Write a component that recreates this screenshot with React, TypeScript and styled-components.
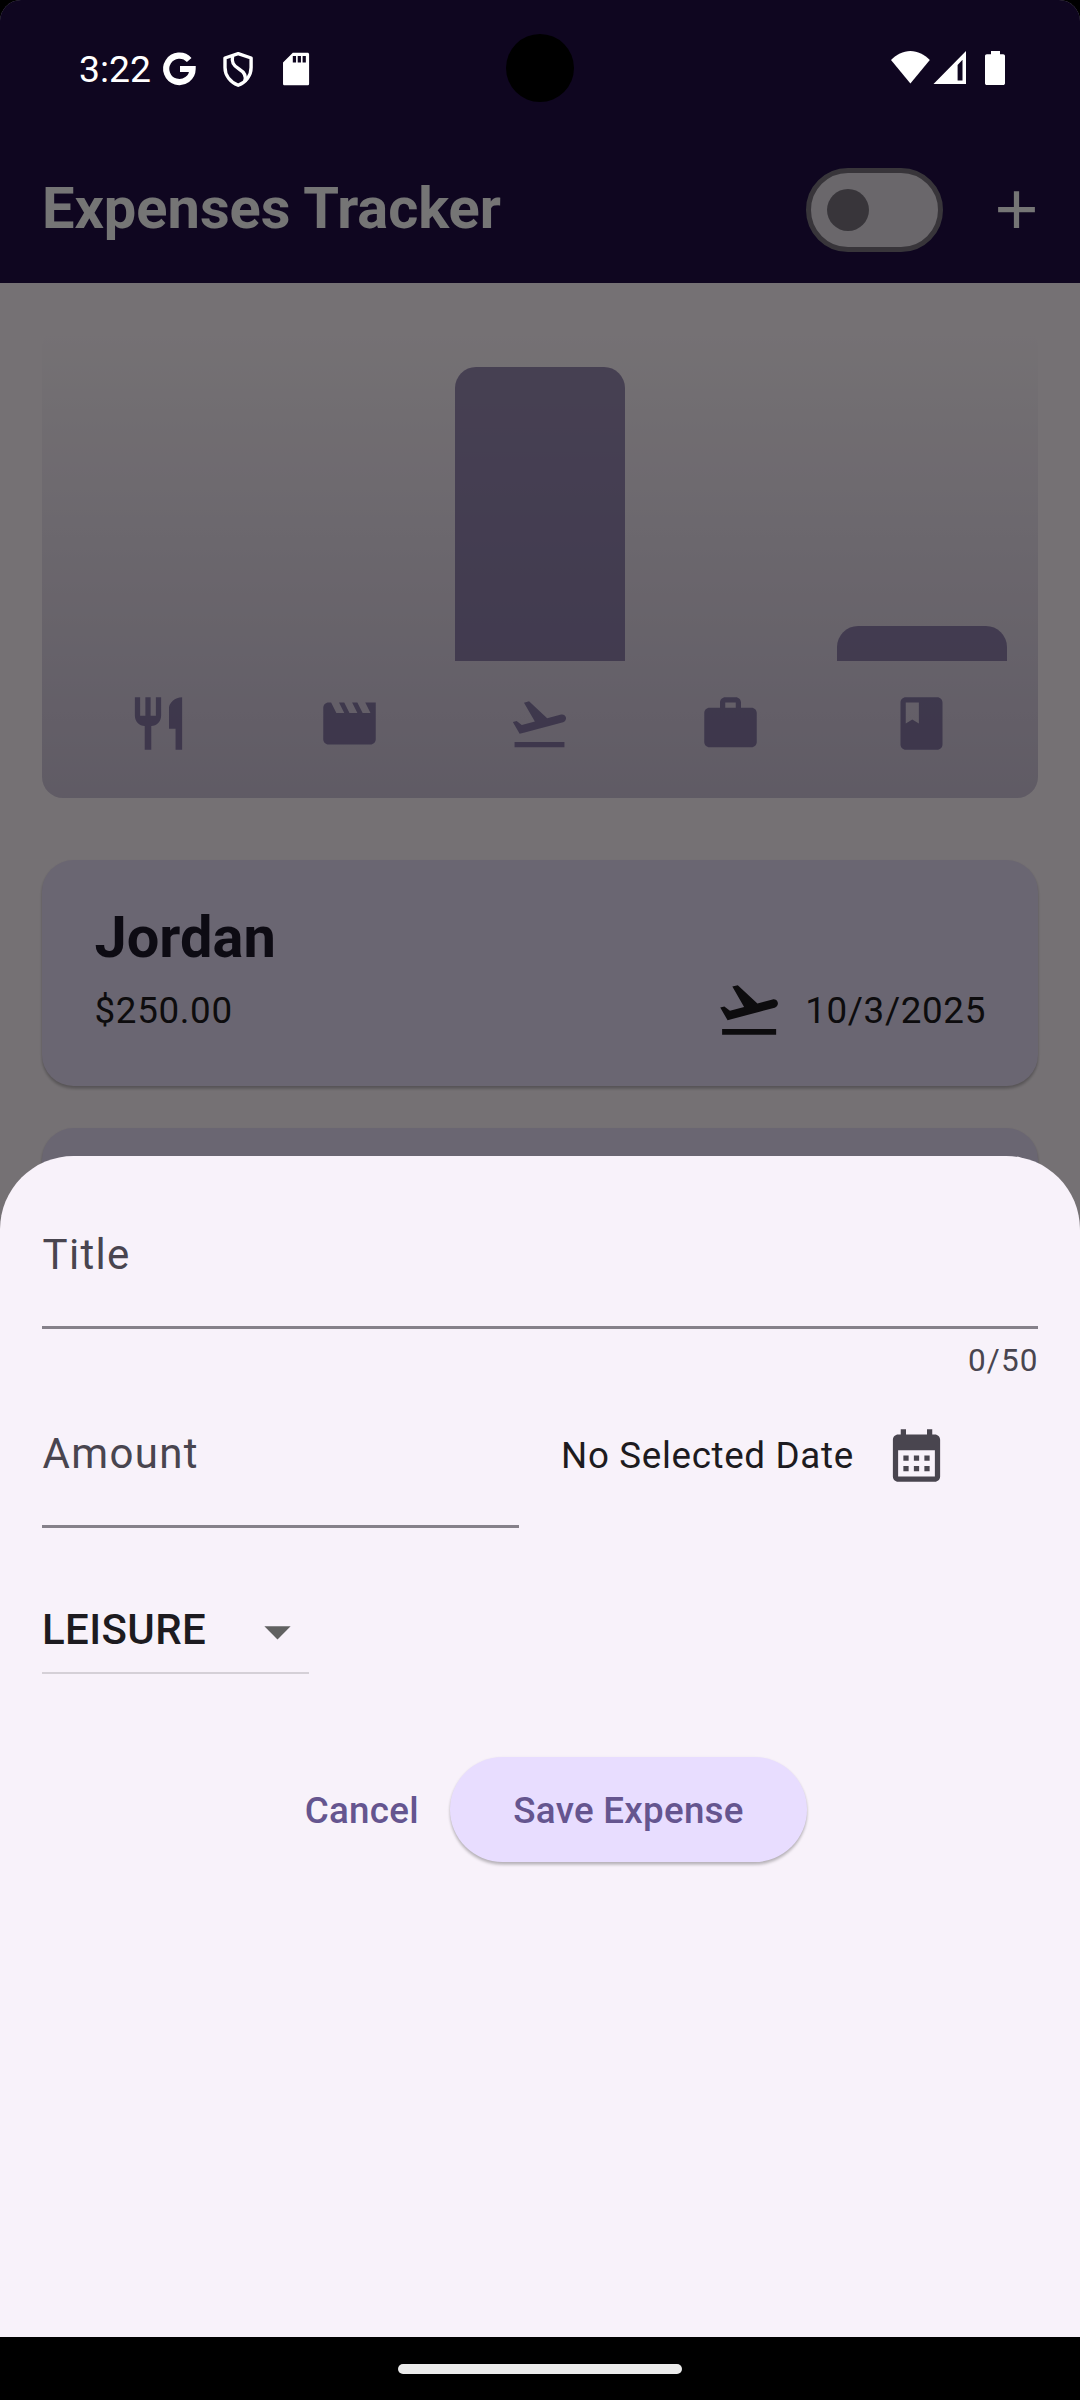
import React from "react";
import styled, { createGlobalStyle } from "styled-components";

const GlobalStyle = createGlobalStyle`
  * { box-sizing: border-box; }
  html, body { margin: 0; padding: 0; background: #000; }
  body { font-family: Roboto, "Noto Sans", sans-serif; }
  button { font-family: inherit; border: 0; padding: 0; background: none; color: inherit; }
`;

const Screen = styled.div`
  position: relative;
  width: 1080px;
  height: 2400px;
  overflow: hidden;
  background: #000;
`;

const Page = styled.main`
  display: flex;
  flex-direction: column;
  height: 2337px;
  overflow: hidden;
  border-radius: 21px 21px 0 0;
  background: #fff7fd;
`;

const AppBar = styled.header`
  display: flex;
  align-items: center;
  height: 283px;
  flex: none;
  padding: 136px 32px 0 42px;
  background: #210f47;
  color: #fff;
`;

const AppTitle = styled.h1`
  flex: 1;
  margin: 0;
  padding-bottom: 2px;
  font-size: 57.75px;
  font-weight: 700;
  line-height: 73.5px;
`;

const Switch = styled.div`
  display: flex;
  align-items: center;
  width: 137px;
  height: 84px;
  margin-right: 42px;
  padding-left: 16.4px;
  border: 5.25px solid #7a757f;
  border-radius: 42px;
  background: #e6e0e9;
`;

const Thumb = styled.div`
  width: 42px;
  height: 42px;
  border-radius: 50%;
  background: #7a757f;
`;

const Icon = styled.svg<{ $size?: number }>`
  display: block;
  flex: none;
  width: ${(p) => p.$size ?? 63}px;
  height: ${(p) => p.$size ?? 63}px;
  fill: currentColor;
`;

const Chart = styled.section`
  display: flex;
  flex-direction: column;
  flex: none;
  gap: 31px;
  height: 472.5px;
  margin: 42px 42px 0;
  padding: 42px 21px 42.5px;
  border-radius: 21px;
  background: linear-gradient(to top, rgba(101, 85, 143, 0.3), rgba(101, 85, 143, 0));
`;

const Bars = styled.div`
  display: grid;
  grid-template-columns: repeat(5, 1fr);
  flex: 1;
`;

const BarSlot = styled.div`
  display: flex;
  align-items: flex-end;
  padding: 0 10.5px;
`;

const Bar = styled.div`
  width: 100%;
  border-radius: 21px 21px 0 0;
  background: rgba(101, 85, 143, 0.65);
`;

const Labels = styled.div`
  display: grid;
  grid-template-columns: repeat(5, 1fr);
  justify-items: center;
  height: 63px;
  color: rgba(101, 85, 143, 0.7);
`;

const List = styled.section`
  display: flex;
  flex-direction: column;
  gap: 42px;
  padding: 62.5px 42px 0;
`;

const Card = styled.article`
  height: 226px;
  flex: none;
  padding: 41px 52px 42px 52.5px;
  border-radius: 31.5px;
  background: #e8def8;
  box-shadow: 0 3px 3px rgba(0, 0, 0, 0.2), 0 1px 3px rgba(0, 0, 0, 0.1);
`;

const CardTitle = styled.h2`
  margin: 0;
  color: #1d192b;
  font-size: 57.75px;
  font-weight: 700;
  line-height: 73.5px;
`;

const CardRow = styled.div`
  display: flex;
  align-items: center;
  justify-content: space-between;
  height: 70px;
  color: #1d1b20;
  font-size: 36.75px;
  letter-spacing: 0.66px;
  line-height: 50px;
`;

const CardText = styled.span`
  padding-top: 2px;
`;

const CardDate = styled.div`
  display: flex;
  align-items: center;
  gap: 21.6px;
`;

const Scrim = styled.div`
  position: absolute;
  inset: 0;
  background: rgba(0, 0, 0, 0.541);
`;

const StatusBar = styled.div`
  position: absolute;
  top: 0;
  left: 0;
  right: 0;
  display: flex;
  align-items: center;
  justify-content: space-between;
  height: 136px;
  padding: 0 74px 0 79px;
  color: #fff;
`;

const Clock = styled.span`
  width: 73px;
  padding-top: 1px;
  font-size: 37.3px;
  line-height: 44px;
`;

const StatusGroup = styled.div`
  display: flex;
  align-items: center;
`;

const StatusSvg = styled.svg`
  display: block;
  height: 136px;
  fill: currentColor;
`;

const Camera = styled.div`
  position: absolute;
  top: 34px;
  left: 506px;
  width: 68px;
  height: 68px;
  border-radius: 50%;
  background: #000;
`;

const Sheet = styled.form`
  position: absolute;
  left: 0;
  right: 0;
  bottom: 63px;
  height: 1181.5px;
  padding: 67.5px 42px 0;
  border-radius: 73.5px 73.5px 0 0;
  background: #f8f2fa;
`;

const Field = styled.label<{ $width?: number }>`
  display: block;
  width: ${(p) => (p.$width ? `${p.$width}px` : "100%")};
  height: 106px;
  border-bottom: 3px solid #86818a;
  color: #49454f;
  font-size: 42px;
  letter-spacing: 1.3125px;
  line-height: 63px;
  text-indent: 0.6px;
`;

const Counter = styled.div`
  margin: 11px -0.4px 0 0;
  color: #49454f;
  font-size: 31.5px;
  letter-spacing: 1.05px;
  line-height: 42px;
  text-align: right;
`;

const AmountRow = styled.div`
  display: flex;
  gap: 42px;
  margin-top: 40px;
`;

const DatePick = styled.div`
  display: flex;
  align-items: center;
  gap: 31px;
  height: 67px;
  color: #1d1b20;
  font-size: 36.75px;
  letter-spacing: 0.66px;
`;

const CalendarButton = styled.button`
  color: #49454f;
`;

const Dropdown = styled.div`
  display: flex;
  justify-content: space-between;
  width: 267px;
  height: 76px;
  margin-top: 70px;
  border-bottom: 2px solid #d5d0d7;
  color: #1d1b20;
  font-size: 42px;
  font-weight: 500;
  letter-spacing: 0.39px;
  line-height: 63px;
`;

const Caret = styled(Icon)`
  margin-top: 2px;
  color: #616161;
`;

const Actions = styled.div`
  display: flex;
  justify-content: center;
  margin-top: 83px;
`;

const Button = styled.button<{ $filled?: boolean }>`
  height: 105px;
  padding: 2px ${(p) => (p.$filled ? 63 : 31.5)}px 0;
  border-radius: 52.5px;
  background: ${(p) => (p.$filled ? "#e8ddff" : "transparent")};
  box-shadow: ${(p) => (p.$filled ? "0 3px 3px rgba(0, 0, 0, 0.2), 0 1px 3px rgba(0, 0, 0, 0.1)" : "none")};
  color: #65558f;
  font-size: 36.75px;
  font-weight: 500;
  letter-spacing: 0.26px;
`;

const NavBar = styled.nav`
  position: absolute;
  left: 0;
  right: 0;
  bottom: 0;
  display: flex;
  justify-content: center;
  height: 63px;
  padding-top: 27px;
  background: #000;
`;

const Handle = styled.div`
  width: 284px;
  height: 10px;
  border-radius: 5px;
  background: #ebebeb;
`;

const paths = {
  food: "M11 9H9V2H7v7H5V2H3v7c0 2.12 1.66 3.84 3.75 3.97V22h2.5v-9.03C11.34 12.84 13 11.12 13 9V2h-2v7zm5-3v8h2.5v8H21V2c-2.76 0-5 2.24-5 4z",
  leisure:
    "M18 4l2 4h-3l-2-4h-2l2 4h-3l-2-4H8l2 4H7L5 4H4c-1.1 0-1.99.9-1.99 2L2 18c0 1.1.9 2 2 2h16c1.1 0 2-.9 2-2V4h-4z",
  travel:
    "M2.5 19h19v2h-19zm19.57-9.36c-.21-.8-1.04-1.28-1.84-1.06L14.92 10l-6.9-6.43-1.93.51 4.14 7.17-4.97 1.33-1.97-1.54-1.45.39 1.82 3.16.77 1.33 1.6-.43 5.31-1.42 4.35-1.16L21 11.49c.81-.23 1.28-1.05 1.07-1.85z",
  work: "M20 6h-4V4c0-1.11-.89-2-2-2h-4c-1.11 0-2 .89-2 2v2H4c-1.11 0-1.99.89-1.99 2L2 19c0 1.11.89 2 2 2h16c1.11 0 2-.89 2-2V8c0-1.11-.89-2-2-2zm-6 0h-4V4h4v2z",
  study:
    "M18 2H6c-1.1 0-2 .9-2 2v16c0 1.1.9 2 2 2h12c1.1 0 2-.9 2-2V4c0-1.1-.9-2-2-2zM6 4h5v8l-2.5-1.5L6 12V4z",
  calendar:
    "M19 4h-1V2h-2v2H8V2H6v2H5c-1.11 0-1.99.9-1.99 2L3 20c0 1.1.89 2 2 2h14c1.1 0 2-.9 2-2V6c0-1.1-.9-2-2-2zm0 16H5V10h14v10zM9 14H7v-2h2v2zm4 0h-2v-2h2v2zm4 0h-2v-2h2v2zm-8 4H7v-2h2v2zm4 0h-2v-2h2v2zm4 0h-2v-2h2v2z",
  add: "M19 13h-6v6h-2v-6H5v-2h6V5h2v6h6v2z",
  caret: "M7 10l5 5 5-5z",
};

function Glyph({ name, size }: { name: keyof typeof paths; size?: number }) {
  return (
    <Icon viewBox="0 0 24 24" $size={size} aria-hidden="true">
      <path d={paths[name]} />
    </Icon>
  );
}

const categories: { icon: keyof typeof paths; share: number }[] = [
  { icon: "food", share: 0 },
  { icon: "leisure", share: 0 },
  { icon: "travel", share: 1 },
  { icon: "work", share: 0 },
  { icon: "study", share: 0.12 },
];

export default function App() {
  return (
    <Screen>
      <GlobalStyle />
      <Page>
        <AppBar>
          <AppTitle>Expenses Tracker</AppTitle>
          <Switch>
            <Thumb />
          </Switch>
          <Glyph name="add" />
        </AppBar>
        <Chart>
          <Bars>
            {categories.map((c) => (
              <BarSlot key={c.icon}>
                {c.share > 0 && <Bar style={{ height: `${c.share * 100}%` }} />}
              </BarSlot>
            ))}
          </Bars>
          <Labels>
            {categories.map((c) => (
              <Glyph key={c.icon} name={c.icon} />
            ))}
          </Labels>
        </Chart>
        <List>
          <Card>
            <CardTitle>Jordan</CardTitle>
            <CardRow>
              <CardText>$250.00</CardText>
              <CardDate>
                <Glyph name="travel" size={68.25} />
                <CardText>10/3/2025</CardText>
              </CardDate>
            </CardRow>
          </Card>
          <Card />
        </List>
      </Page>

      <Scrim />

      <StatusBar>
        <StatusGroup>
          <Clock>3:22</Clock>
          {/* Account, shield and storage notifications */}
          <StatusSvg width="160" viewBox="152 0 160 136">
            <path
              d="M189.200 60A13.200 13.200 0 1 0 192.600 69H180"
              fill="none"
              stroke="currentColor"
              strokeWidth="6.2"
            />
            <g fill="none" stroke="currentColor" strokeWidth="3.4" strokeLinejoin="round">
              <path d="M238.200 53.600L251.100 58V67.500C251.100 75.500 246 82 238.200 85.300C230.400 82 225 75.500 225 67.500V58Z" />
              <path d="M232.600 55.500C231.500 62 233 65.500 239 69C244.800 72.500 246.500 76 244.800 81" />
            </g>
            <path
              transform="translate(276.5 49.4) scale(1.63)"
              d="M19 2h-9L4 8v13c0 .6.4 1 1 1h14c.6 0 1-.4 1-1V3c0-.6-.4-1-1-1zm-7 6h-2V4h2v4zm3 0h-2V4h2v4zm3 0h-2V4h2v4z"
            />
          </StatusSvg>
        </StatusGroup>
        <StatusSvg width="116" viewBox="890 0 116 136">
          <path d="M910.400 83.600L891 60C896.500 54.500 903 51 910.400 51C917.800 51 924.300 54.500 929.800 60Z" />
          <path
            fillRule="evenodd"
            d="M933.500 84L966 51V84ZM957.600 65V80.500H962.500V59.800Z"
          />
          <path d="M991 51h9v3.300h3.200c1 0 1.800.8 1.800 1.800v27.100c0 1-.8 1.800-1.800 1.800h-16.400c-1 0-1.800-.8-1.800-1.800V56.100c0-1 .8-1.800 1.800-1.800h4.200z" />
        </StatusSvg>
      </StatusBar>
      <Camera />

      <Sheet onSubmit={(e) => e.preventDefault()}>
        <Field>Title</Field>
        <Counter>0/50</Counter>
        <AmountRow>
          <Field $width={477}>Amount</Field>
          <DatePick>
            <span>No Selected Date</span>
            <CalendarButton type="button" aria-label="Pick a date">
              <Glyph name="calendar" />
            </CalendarButton>
          </DatePick>
        </AmountRow>
        <Dropdown>
          <span>LEISURE</span>
          <Caret viewBox="0 0 24 24">
            <path d={paths.caret} />
          </Caret>
        </Dropdown>
        <Actions>
          <Button type="button">Cancel</Button>
          <Button type="submit" $filled>
            Save Expense
          </Button>
        </Actions>
      </Sheet>

      <NavBar>
        <Handle />
      </NavBar>
    </Screen>
  );
}
